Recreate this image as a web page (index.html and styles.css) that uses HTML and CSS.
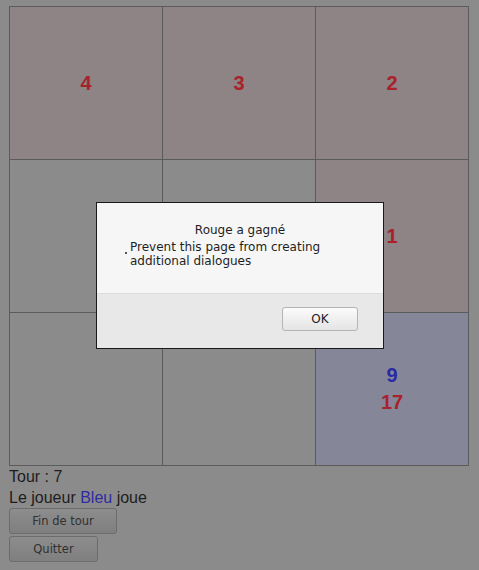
FILE: index.html
```html
<!DOCTYPE html>
<html lang="fr">
<head>
<meta charset="utf-8">
<title>Jeu</title>
<link rel="stylesheet" href="styles.css">
</head>
<body>
<div class="page">
  <div class="board">
    <div class="cell red"><span class="n r">4</span></div>
    <div class="cell red"><span class="n r">3</span></div>
    <div class="cell red"><span class="n r">2</span></div>
    <div class="cell"></div>
    <div class="cell"></div>
    <div class="cell red"><span class="n r">1</span></div>
    <div class="cell"></div>
    <div class="cell"></div>
    <div class="cell blue"><span class="n b">9</span><span class="n r">17</span></div>
  </div>
  <div class="info">
    <div class="line">Tour : 7</div>
    <div class="line">Le joueur <span class="bleu">Bleu</span> joue</div>
  </div>
  <div class="actions">
    <button class="btn btn-fin">Fin de tour</button>
    <button class="btn btn-quit">Quitter</button>
  </div>
</div>

<div class="dialog">
  <div class="dialog-body">
    <div class="dialog-title">Rouge a gagné</div>
    <label class="dialog-check"><span class="chk"></span><span class="chk-text">Prevent this page from creating additional dialogues</span></label>
  </div>
  <div class="dialog-foot">
    <button class="ok">OK</button>
  </div>
</div>
</body>
</html>
```

FILE: styles.css
```css
html, body {
  margin: 0;
  padding: 0;
}
body {
  background: #8b8b8b;
  width: 479px;
  height: 570px;
  overflow: hidden;
  position: relative;
  font-family: "Liberation Sans", Arial, sans-serif;
}
.page {
  padding: 6px 0 0 9px;
}
.board {
  display: grid;
  grid-template-columns: repeat(3, 152px);
  grid-template-rows: repeat(3, 152px);
  gap: 1px;
  padding: 1px;
  background: #5b5b5b;
  width: 458px;
}
.cell {
  background: #8b8b8b;
  display: flex;
  flex-direction: column;
  align-items: center;
  justify-content: center;
}
.cell.red { background: #8e8385; }
.cell.blue { background: #858697; }
.n {
  font-weight: bold;
  font-size: 20px;
  line-height: 27px;
}
.n.r { color: #a8222b; }
.n.b { color: #2b2aa6; }
.info {
  font-size: 16px;
  color: #1d1d1d;
}
.line {
  line-height: 21px;
}
.bleu { color: #2c2ba0; }
.actions {
  display: flex;
  flex-direction: column;
  align-items: flex-start;
  gap: 2px;
}
.btn {
  font-family: "DejaVu Sans", sans-serif;
  font-size: 11.5px;
  color: #303030;
  height: 26px;
  border: 1px solid #6c6c6c;
  border-radius: 3px;
  background: linear-gradient(#8d8d8d, #7f7f7f);
  padding: 0;
  margin: 0;
}
.btn-fin { width: 108px; }
.btn-quit { width: 89px; }

.dialog {
  position: absolute;
  left: 96px;
  top: 202px;
  width: 286px;
  height: 145px;
  border: 1px solid #1a1a1a;
  background: #f6f6f6;
  font-family: "DejaVu Sans", sans-serif;
  font-size: 12px;
  color: #1e1e1e;
  display: flex;
  flex-direction: column;
}
.dialog-body {
  height: 91px;
  flex: none;
  border-bottom: 1px solid #dcdcdc;
  padding: 20px 0 0 28px;
  box-sizing: border-box;
}
.dialog-title {
  text-align: center;
  line-height: 14px;
  margin-left: -28px;
}
.dialog-check {
  display: flex;
  align-items: flex-start;
  margin-top: 4px;
  line-height: 13.5px;
}
.chk {
  width: 2px;
  height: 2px;
  background: #555;
  margin: 11px 3px 0 0;
  flex: none;
}
.chk-text {
  width: 220px;
}
.dialog-foot {
  flex: 1;
  background: #e8e8e8;
  display: flex;
  justify-content: flex-end;
  align-items: flex-start;
  padding: 13px 25px 0 0;
}
.ok {
  width: 76px;
  height: 24px;
  border: 1px solid #b4b4b4;
  border-radius: 3px;
  background: linear-gradient(#fbfbfb, #e4e4e4);
  font-family: "DejaVu Sans", sans-serif;
  font-size: 12px;
  color: #1e1e1e;
  padding: 0;
}
```
